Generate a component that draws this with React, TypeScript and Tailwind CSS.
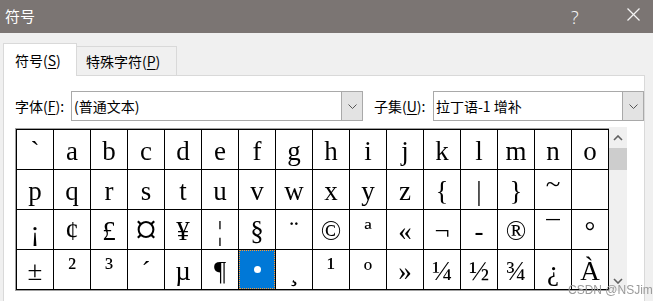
import React from "react";

const rows: string[][] = [
  ["`", "a", "b", "c", "d", "e", "f", "g", "h", "i", "j", "k", "l", "m", "n", "o"],
  ["p", "q", "r", "s", "t", "u", "v", "w", "x", "y", "z", "{", "|", "}", "~", ""],
  ["¡", "¢", "£", "¤", "¥", "¦", "§", "¨", "©", "ª", "«", "¬", "-", "®", "¯", "°"],
  ["±", "²", "³", "´", "µ", "¶", "·", "¸", "¹", "º", "»", "¼", "½", "¾", "¿", "À"],
];

const glyphClass: Record<string, string> = {
  "²": "pt-[4px] text-[27px] leading-none",
  "³": "pt-[4px] text-[27px] leading-none",
  "¹": "pt-[4px] text-[27px] leading-none",
  "~": "pt-[1px] text-[27px] leading-none",
  "¤": "pt-0 text-[44px] leading-[39px]",
};

const cjk = { fontFamily: '"Noto Sans CJK SC", "Noto Sans", sans-serif' };

function Chevron({ up }: { up?: boolean }) {
  return (
    <svg width="10" height="6" viewBox="0 0 10 6">
      <polyline
        points={up ? "1,5 5,1 9,5" : "1,1 5,5 9,1"}
        fill="none"
        stroke="#606060"
        strokeWidth="1.6"
      />
    </svg>
  );
}

function Combo({ width, text }: { width: string; text: string }) {
  return (
    <div className={`${width} h-[30px] border border-[#a9a9a9] bg-white flex items-stretch`}>
      <div className="flex-1 flex items-center pl-[2px] text-[14px] text-black" style={cjk}>
        {text}
      </div>
      <div className="w-[21px] bg-[#e3e3e3] border-l border-[#a9a9a9] flex items-center justify-center">
        <svg width="9" height="5" viewBox="0 0 9 5">
          <polyline points="0.5,0.5 4.5,4.5 8.5,0.5" fill="none" stroke="#555" strokeWidth="1" />
        </svg>
      </div>
    </div>
  );
}

export default function App() {
  return (
    <div className="w-[653px] h-[301px] bg-[#f0f0f0] overflow-hidden relative flex flex-col">
      {/* Title bar */}
      <div className="h-[33px] bg-[#7b7573] flex items-center relative shrink-0">
        <span className="ml-[5px] text-white text-[15px]" style={cjk}>
          符号
        </span>
        <span
          className="absolute left-[571px] top-[4px] text-[#f4f4f4] text-[18px] font-light"
          style={{ fontFamily: '"Noto Sans", sans-serif' }}
        >
          ?
        </span>
        <svg className="absolute left-[627px] top-[8px]" width="13" height="13" viewBox="0 0 13 13">
          <line x1="0.5" y1="0.5" x2="12.5" y2="12.5" stroke="#f4f4f4" strokeWidth="1.2" />
          <line x1="12.5" y1="0.5" x2="0.5" y2="12.5" stroke="#f4f4f4" strokeWidth="1.2" />
        </svg>
      </div>

      {/* Tabs */}
      <div className="mt-[10px] ml-[3px] flex items-end -mb-px relative z-10 shrink-0">
        <div
          className="w-[74px] h-[33px] bg-white border-l border-t border-r border-[#d9d9d9] flex items-center pl-[11px] text-[14px] text-black"
          style={cjk}
        >
          符号(<span className="underline underline-offset-2">S</span>)
        </div>
        <div
          className="w-[100px] h-[30px] bg-[#f0f0f0] border-t border-r border-b border-[#d9d9d9] flex items-center pl-[9px] text-[14px] text-black"
          style={cjk}
        >
          特殊字符(<span className="underline underline-offset-2">P</span>)
        </div>
      </div>

      {/* Panel */}
      <div className="ml-[3px] mr-[8px] flex-1 bg-white border-l border-t border-r border-[#d9d9d9] flex flex-col pl-[11px]">
        <div className="mt-[15px] flex items-center">
          <span className="text-[14px] text-black w-[56px]" style={cjk}>
            字体(<span className="underline underline-offset-2">F</span>):
          </span>
          <Combo width="w-[292px]" text="(普通文本)" />
          <span className="ml-[11px] text-[14px] text-black w-[59px]" style={cjk}>
            子集(<span className="underline underline-offset-2">U</span>):
          </span>
          <Combo width="w-[211px]" text="拉丁语-1 增补" />
        </div>

        <div className="mt-[7px] flex items-stretch">
          <div className="border-l border-t border-b border-[#a0a0a0]">
            <div className="border-l border-t border-black will-change-transform">
              {rows.map((row, ri) => (
                <div key={ri} className="flex">
                  {row.map((ch, ci) => {
                    const selected = ri === 3 && ci === 6;
                    const cls = glyphClass[ch] ?? "pt-[8px] text-[27px] leading-none";
                    return (
                      <div
                        key={ci}
                        className="w-[37px] h-[40px] border-r border-b border-black relative"
                      >
                        {selected ? (
                          <div className="absolute inset-0 bg-[#0078d7] outline-1 outline-dotted outline-[#ff9a2e] -outline-offset-1 flex items-center justify-center">
                            <div className="w-[7px] h-[7px] rounded-full bg-white" />
                          </div>
                        ) : (
                          <div
                            className={`flex justify-center text-black ${cls}`}
                            style={{ fontFamily: '"Liberation Serif", serif' }}
                          >
                            {ch}
                          </div>
                        )}
                      </div>
                    );
                  })}
                </div>
              ))}
            </div>
          </div>
          <div className="w-[18px] bg-[#f0f0f0] flex flex-col items-center -mt-px">
            <div className="h-[21px] flex items-center justify-center">
              <Chevron up />
            </div>
            <div className="w-full h-[22px] bg-[#cdcdcd]" />
            <div className="flex-1" />
            <div className="h-[20px] flex items-center justify-center">
              <Chevron />
            </div>
          </div>
        </div>
      </div>

      {/* Watermark */}
      <span
        className="absolute left-[568px] top-[281px] text-[12px] text-[#9a9a9a]"
        style={{ fontFamily: '"Liberation Sans", sans-serif' }}
      >
        CSDN @NSJim
      </span>
    </div>
  );
}
